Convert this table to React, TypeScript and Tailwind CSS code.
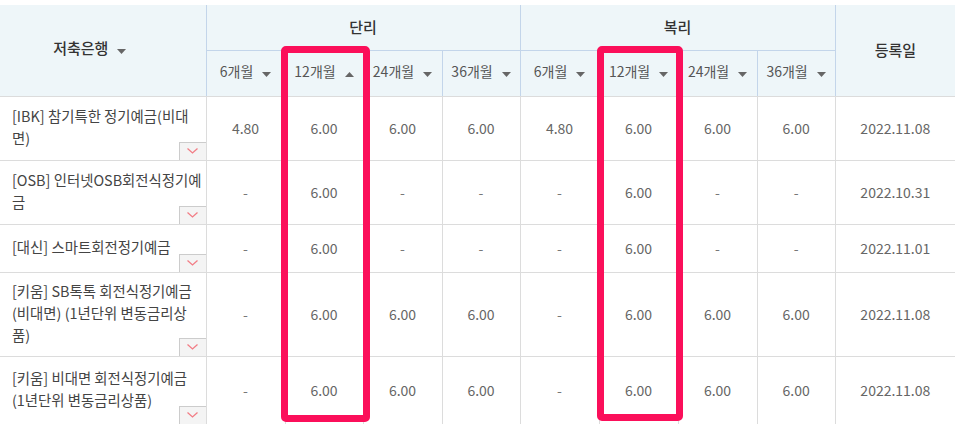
import { ReactNode } from "react";

const subCols = ["6개월", "12개월", "24개월", "36개월"];

type Row = {
  name: ReactNode;
  simple: string[];
  compound: string[];
  date: string;
  h: string;
};

const rows: Row[] = [
  {
    name: "[IBK] 참기특한 정기예금(비대면)",
    simple: ["4.80", "6.00", "6.00", "6.00"],
    compound: ["4.80", "6.00", "6.00", "6.00"],
    date: "2022.11.08",
    h: "h-[64px]",
  },
  {
    name: "[OSB] 인터넷OSB회전식정기예금",
    simple: ["-", "6.00", "-", "-"],
    compound: ["-", "6.00", "-", "-"],
    date: "2022.10.31",
    h: "h-[64px]",
  },
  {
    name: "[대신] 스마트회전정기예금",
    simple: ["-", "6.00", "-", "-"],
    compound: ["-", "6.00", "-", "-"],
    date: "2022.11.01",
    h: "h-[48px]",
  },
  {
    name: "[키움] SB톡톡 회전식정기예금(비대면) (1년단위 변동금리상품)",
    simple: ["-", "6.00", "6.00", "6.00"],
    compound: ["-", "6.00", "6.00", "6.00"],
    date: "2022.11.08",
    h: "h-[84px]",
  },
  {
    name: (
      <>
        [키움] 비대면 회전식정기예금 <span className="whitespace-nowrap">(1년단위</span> 변동금리상품)
      </>
    ),
    simple: ["-", "6.00", "6.00", "6.00"],
    compound: ["-", "6.00", "6.00", "6.00"],
    date: "2022.11.08",
    h: "h-[68px]",
  },
];

const Caret = ({ up }: { up?: boolean }) => (
  <svg width="9" height="5" viewBox="0 0 9 5" className="ml-[9px] inline-block">
    {up ? <path d="M0 5 L4.5 0 L9 5 Z" fill="#666" /> : <path d="M0 0 L9 0 L4.5 5 Z" fill="#666" />}
  </svg>
);

const Toggle = () => (
  <span className="absolute bottom-0 right-0 flex h-[18px] w-[27px] items-center justify-center border-l border-t border-[#cccccc] bg-[#f4f4f4]">
    <svg width="11" height="6" viewBox="0 0 11 6">
      <path d="M0.5 0.5 L5.5 5 L10.5 0.5" fill="none" stroke="#f27d86" strokeWidth="1.3" />
    </svg>
  </span>
);

const Highlight = ({ className }: { className: string }) => (
  <div className={`pointer-events-none absolute top-[46px] rounded-[5px] border-[7px] border-[#fb0f5a] ${className}`} />
);

export default function App() {
  return (
    <div
      className="relative h-[424px] w-[955px] overflow-hidden bg-white pt-[5px]"
      style={{ fontFamily: '"Noto Sans CJK KR", "Noto Sans", sans-serif' }}
    >
      <table className="w-[955px] table-fixed border-collapse text-[14px]">
        <colgroup>
          <col className="w-[206px]" />
          <col className="w-[79px]" />
          <col className="w-[78px]" />
          <col className="w-[79px]" />
          <col className="w-[78px]" />
          <col className="w-[79px]" />
          <col className="w-[79px]" />
          <col className="w-[79px]" />
          <col className="w-[78px]" />
          <col className="w-[120px]" />
        </colgroup>
        <thead className="bg-[#eef6f9] text-[#333]">
          <tr className="h-[45px]">
            <th rowSpan={2} className="border-b border-r border-b-[#dcdcdc] border-r-[#c3d5ea] pr-[26px] text-[15px] font-medium">
              <span className="relative -top-[2px]">저축은행</span>
              <Caret />
            </th>
            <th colSpan={4} className="border-b border-r border-[#c3d5ea] text-[15px] font-medium">
              단리
            </th>
            <th colSpan={4} className="border-b border-r border-[#c3d5ea] text-[15px] font-medium">
              복리
            </th>
            <th rowSpan={2} className="border-b border-b-[#dcdcdc] text-[15px] font-medium">
              등록일
            </th>
          </tr>
          <tr className="h-[46px]">
            {[0, 1].map((g) =>
              subCols.map((c, i) => (
                <th
                  key={`${g}-${c}`}
                  className="border-b border-r border-b-[#dcdcdc] border-r-[#c3d5ea] text-[14px] font-normal text-[#555]"
                >
                  <span className="relative -top-[2px]">{c}</span>
                  <Caret up={g === 0 && i === 1} />
                </th>
              ))
            )}
          </tr>
        </thead>
        <tbody className="text-[#666]">
          {rows.map((r, idx) => (
            <tr key={idx} className={r.h}>
              <td className="relative border-b border-r border-[#dcdcdc] pb-[3px] pl-[12px] pr-[2px] align-middle text-[14.4px] leading-[22px] text-[#444]">
                {r.name}
                <Toggle />
              </td>
              {[...r.simple, ...r.compound].map((v, i) => (
                <td key={i} className="border-b border-r border-[#dcdcdc] text-center">
                  {v === "-" ? <span className="text-[#777]">-</span> : v}
                </td>
              ))}
              <td className="border-b border-[#dcdcdc] text-center">{r.date}</td>
            </tr>
          ))}
        </tbody>
      </table>
      <Highlight className="left-[281px] h-[376px] w-[89px]" />
      <Highlight className="left-[597px] h-[375px] w-[86px]" />
    </div>
  );
}
